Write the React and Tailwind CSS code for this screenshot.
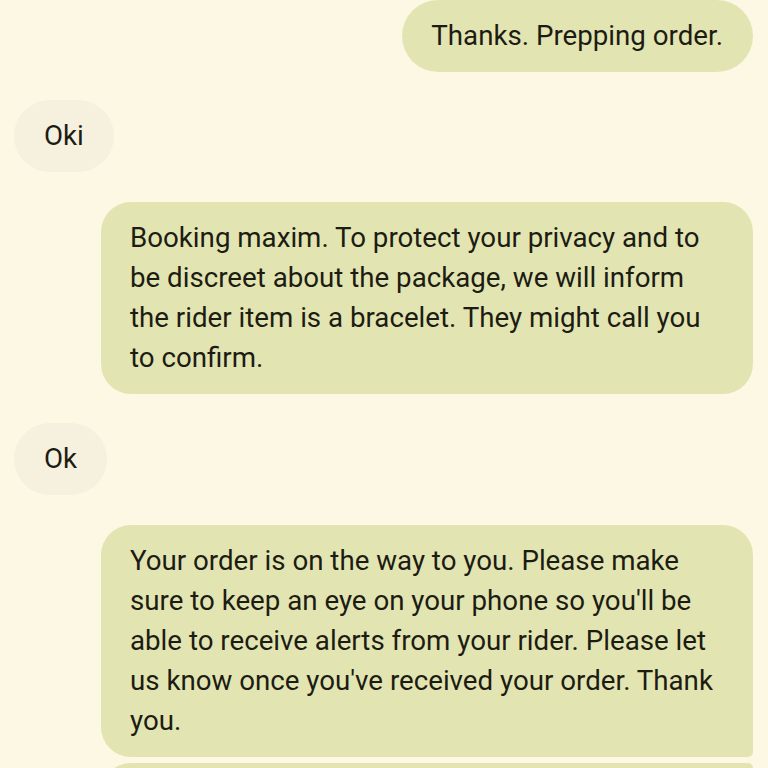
import React from 'react'

const messages = [
  { id: 1, out: true, text: 'Thanks. Prepping order.', gap: 'mt-0' },
  { id: 2, out: false, text: 'Oki', gap: 'mt-[28px]' },
  {
    id: 3,
    out: true,
    wide: true,
    text: 'Booking maxim. To protect your privacy and to be discreet about the package, we will inform the rider item is a bracelet. They might call you to confirm.',
    gap: 'mt-[30px]',
  },
  { id: 4, out: false, text: 'Ok', gap: 'mt-[29px]' },
  {
    id: 5,
    out: true,
    wide: true,
    tail: true,
    text: "Your order is on the way to you. Please make sure to keep an eye on your phone so you'll be able to receive alerts from your rider. Please let us know once you've received your order. Thank you.",
    gap: 'mt-[30px]',
  },
]

const Bubble = ({ msg }) => {
  if (!msg.out) {
    return (
      <div className={`flex justify-start pl-[14px] ${msg.gap}`}>
        <div className="bg-[#f6f0df] rounded-[36px] pl-[30px] pr-[30px] py-[16px] text-[#1d1c13]">
          {msg.text}
        </div>
      </div>
    )
  }
  return (
    <div className={`flex justify-end pr-[15px] ${msg.gap}`}>
      <div
        className={`bg-[#e2e5b2] text-[#1d1c13] pl-[29px] py-[16px] ${
          msg.wide ? 'w-[652px] pr-[29px] rounded-[30px]' : 'pr-[30px] rounded-[36px]'
        } ${msg.tail ? 'rounded-br-[5px]' : ''}`}
      >
        {msg.text}
      </div>
    </div>
  )
}

const App = () => {
  return (
    <div
      className="w-[768px] h-[768px] overflow-hidden bg-[#fdf8e3] text-[27.7px] leading-[40px]"
      style={{ fontFamily: 'Roboto, "Noto Sans", sans-serif' }}
    >
      <div>
        {messages.map((m) => (
          <Bubble key={m.id} msg={m} />
        ))}
        {/* next bubble peeking in at the bottom */}
        <div className="flex justify-end pr-[15px] mt-[6px]">
          <div className="w-[652px] h-[80px] bg-[#e2e5b2] rounded-[30px] rounded-tr-[5px]"></div>
        </div>
      </div>
    </div>
  )
}

export default App
